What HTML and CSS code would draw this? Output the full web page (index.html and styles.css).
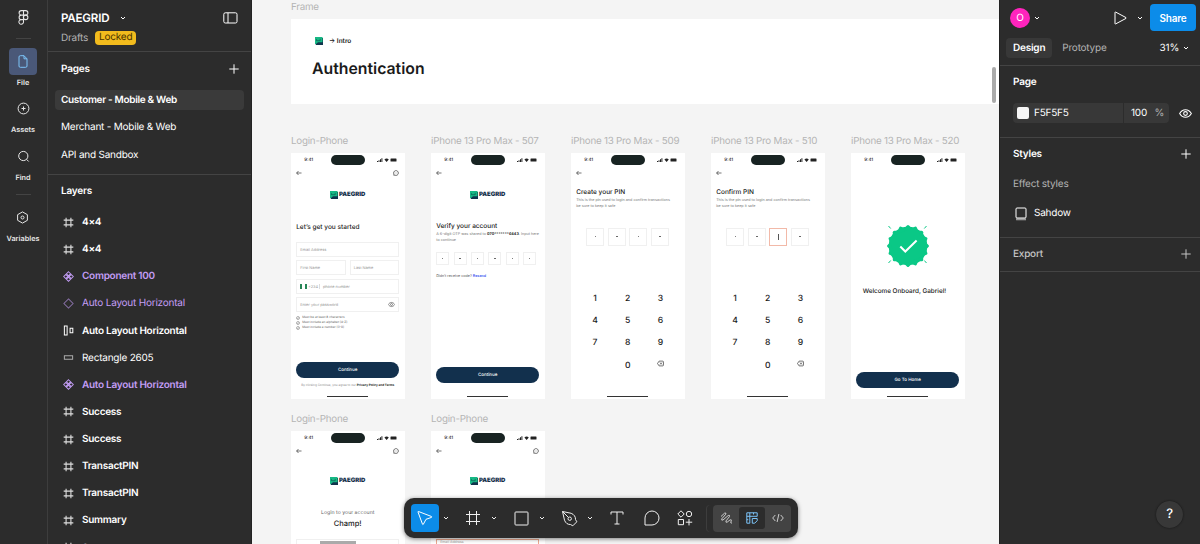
FILE: index.html
```
<!DOCTYPE html>
<html lang="en">
<head>
    <meta charset="UTF-8">
    <meta name="viewport" content="width=device-width, initial-scale=1.0">
    <title>PAEGRID</title>
    <link rel="stylesheet" href="styles.css">
</head>
<body>
    <!-- Icon sprite -->
    <svg class="sprite">
        <symbol id="i-chevron" viewBox="0 0 6 6"><path d="M1 2l2 2 2-2"/></symbol>
        <symbol id="i-plus" viewBox="0 0 10 10"><path d="M5 .3v9.4M.3 5h9.4"/></symbol>
        <symbol id="i-frame" viewBox="0 0 16 16"><path d="M4.5 1v14M11.5 1v14M1 4.5h14M1 11.5h14"/></symbol>
        <symbol id="i-component" viewBox="0 0 12 12"><path d="M6 .8l2.200 2.200L6 5.200 3.800 3zM6 6.800l2.200 2.200L6 11.200 3.800 9zM3 3.800l2.200 2.200L3 8.200.8 6zM9 3.800l2.200 2.200L9 8.200 6.800 6z"/></symbol>
        <symbol id="i-diamond" viewBox="0 0 12 12"><path d="M6 1l5 5-5 5-5-5z"/></symbol>
        <symbol id="i-auto" viewBox="0 0 12 12"><path d="M1.500 1h3v10h-3zM7.700 3.500h3v5h-3z"/></symbol>
        <symbol id="i-rect" viewBox="0 0 12 12"><path d="M1.500 4h9v4h-9z"/></symbol>
        <symbol id="i-eye" viewBox="0 0 12 12"><path d="M.6 6C3.200 1.300 8.800 1.300 11.400 6 8.800 10.700 3.200 10.700.6 6z"/><circle cx="6" cy="6" r="1.700"/></symbol>
        <symbol id="i-back" viewBox="0 0 6 6"><path d="M5.500 3H.6M2.500 1L.6 3l1.900 2"/></symbol>
        <symbol id="i-chat" viewBox="0 0 6 6"><path d="M.7 5.200l.2-1A2.400 2.400 0 1 1 2 5.200zM1.900 3h.3M2.900 3h.3M3.900 3h.3"/></symbol>
        <symbol id="i-tick" viewBox="0 0 4 4"><circle cx="2" cy="2" r="1.500"/><path d="M1.300 2l.5.5.9-1"/></symbol>
        <symbol id="i-delete" viewBox="0 0 7 7"><path d="M.5 3.500l1.600-2.400h3.400q1 0 1 1v2.800q0 1-1 1H2.100zM3 2.500l2 2M5 2.500l-2 2"/></symbol>
        <symbol id="i-status" viewBox="0 0 20 6">
            <path d="M0 5V4h1v1zM1.500 5V3.200h1V5zM3 5V2.200h1V5zM4.400 5V1.200h1V5zM7.400 2.400q2.200-1.900 4.400 0L9.600 5zM14 1.400h5q.5 0 .5.5v2.200q0 .5-.5.500h-5q-.5 0-.5-.5V1.900q0-.5.500-.5z"/>
        </symbol>
        <symbol id="i-brand" viewBox="0 0 8 8">
            <path fill="#10344c" d="M1.500 1H8v7H.7z"/>
            <path fill="#17b884" d="M0 0h7.500v5.200H3L1 7H0z"/>
            <path fill="none" stroke="#0b4a4c" stroke-width=".6" d="M1.500 2.200v1.500h3.700V1.800"/>
        </symbol>
    </svg>

    <div class="app">
        <!-- Navigation rail -->
        <nav class="rail">
            <svg class="icon figma" viewBox="0 0 10 14"><path d="M5 .6H3a2.100 2.100 0 0 0 0 4.200h2zM5 .6h2a2.100 2.100 0 0 1 0 4.200H5zM5 4.800H3A2.100 2.100 0 0 0 3 9h2zM5 9H3a2.150 2.150 0 1 0 2 2.200z"/><circle cx="7" cy="6.900" r="2.100"/></svg>
            <div class="rail-line"></div>
            <div class="rail-item active">
                <span class="rail-icon"><svg class="icon" width="10" height="13" viewBox="0 0 10 13"><path d="M1 2q0-1.300 1.300-1.300H6L9 3.800V11q0 1.300-1.300 1.300H2.300Q1 12.300 1 11zM6 .7v3.100h3"/></svg></span>
                <span>File</span>
            </div>
            <div class="rail-item">
                <span class="rail-icon"><svg class="icon" width="13" height="13" viewBox="0 0 13 13"><circle cx="6.500" cy="6.500" r="5.400"/><path d="M6.500 4.500v4M4.500 6.500h4"/></svg></span>
                <span>Assets</span>
            </div>
            <div class="rail-item">
                <span class="rail-icon"><svg class="icon" width="13" height="13" viewBox="0 0 13 13"><circle cx="6.300" cy="6" r="4.600"/><path d="M9.500 9.300l2.200 2.200"/></svg></span>
                <span>Find</span>
            </div>
            <div class="rail-line lower"></div>
            <div class="rail-item">
                <span class="rail-icon"><svg class="icon" width="13" height="13" viewBox="0 0 13 13"><path d="M6.500.9l4.900 2.800v5.600l-4.900 2.800-4.900-2.800V3.700z"/><circle cx="6.500" cy="6.500" r="1.500"/></svg></span>
                <span>Variables</span>
            </div>
        </nav>

        <!-- Pages and layers -->
        <aside class="left">
            <header class="file-head">
                <div class="file-title">
                    <span class="file-name">PAEGRID</span>
                    <svg class="icon chev"><use href="#i-chevron"/></svg>
                    <svg class="icon sidebar-icon" viewBox="0 0 15 12"><rect x=".8" y=".8" width="13.200" height="10.200" rx="1.500"/><path d="M5 .8V11"/></svg>
                </div>
                <div class="file-sub"><span>Drafts</span><span class="locked">Locked</span></div>
            </header>
            <section class="pages">
                <div class="section-title"><span>Pages</span><svg class="icon plus"><use href="#i-plus"/></svg></div>
                <div class="page selected">Customer - Mobile &amp; Web</div>
                <div class="page">Merchant - Mobile &amp; Web</div>
                <div class="page">API and Sandbox</div>
            </section>
            <section class="layers">
                <div class="layers-title">Layers</div>
                <div class="layer"><svg class="icon frame"><use href="#i-frame"/></svg>4×4</div>
                <div class="layer"><svg class="icon frame"><use href="#i-frame"/></svg>4×4</div>
                <div class="layer purple"><svg class="icon"><use href="#i-component"/></svg>Component 100</div>
                <div class="layer purple light"><svg class="icon"><use href="#i-diamond"/></svg>Auto Layout Horizontal</div>
                <div class="layer"><svg class="icon"><use href="#i-auto"/></svg>Auto Layout Horizontal</div>
                <div class="layer light"><svg class="icon"><use href="#i-rect"/></svg>Rectangle 2605</div>
                <div class="layer purple"><svg class="icon"><use href="#i-component"/></svg>Auto Layout Horizontal</div>
                <div class="layer"><svg class="icon frame"><use href="#i-frame"/></svg>Success</div>
                <div class="layer"><svg class="icon frame"><use href="#i-frame"/></svg>Success</div>
                <div class="layer"><svg class="icon frame"><use href="#i-frame"/></svg>TransactPIN</div>
                <div class="layer"><svg class="icon frame"><use href="#i-frame"/></svg>TransactPIN</div>
                <div class="layer"><svg class="icon frame"><use href="#i-frame"/></svg>Summary</div>
                <div class="layer"><svg class="icon frame"><use href="#i-frame"/></svg>Summary</div>
            </section>
        </aside>

        <!-- Canvas -->
        <main class="canvas">
            <div class="board board-intro">
                <div class="board-name">Frame</div>
                <div class="intro">
                    <div class="crumb"><svg class="crumb-logo"><use href="#i-brand"/></svg><span>→ Intro</span></div>
                    <h1>Authentication</h1>
                </div>
            </div>

            <div class="board board-signup">
                <div class="board-name">Login-Phone</div>
                <div class="phone">
                    <div class="status"><span>9:41</span><i class="island"></i><svg><use href="#i-status"/></svg></div>
                    <div class="nav"><svg class="icon"><use href="#i-back"/></svg><svg class="icon"><use href="#i-chat"/></svg></div>
                    <div class="logo"><svg><use href="#i-brand"/></svg><b>PAEGRID</b></div>
                    <div class="phone-title signup-title">Let’s get you started</div>
                    <div class="form">
                        <div class="field">Email Address</div>
                        <div class="field-row"><div class="field">First Name</div><div class="field">Last Name</div></div>
                        <div class="field"><i class="flag"></i><span class="code">+234</span><span>phone number</span></div>
                        <div class="field"><span>Enter your password</span><svg class="icon eye"><use href="#i-eye"/></svg></div>
                    </div>
                    <div class="rules">
                        <div><svg class="icon"><use href="#i-tick"/></svg>Must be at least 8 characters</div>
                        <div><svg class="icon"><use href="#i-tick"/></svg>Must include an alphabet (A-Z)</div>
                        <div><svg class="icon"><use href="#i-tick"/></svg>Must include a number (0-9)</div>
                    </div>
                    <div class="cta signup-cta">Continue</div>
                    <div class="legal">By clicking Continue, you agree to our <b>Privacy Policy and Terms</b></div>
                    <i class="home"></i>
                </div>
            </div>

            <div class="board board-verify">
                <div class="board-name">iPhone 13 Pro Max - 507</div>
                <div class="phone">
                    <div class="status"><span>9:41</span><i class="island"></i><svg><use href="#i-status"/></svg></div>
                    <div class="nav"><svg class="icon"><use href="#i-back"/></svg></div>
                    <div class="logo"><svg><use href="#i-brand"/></svg><b>PAEGRID</b></div>
                    <div class="phone-title verify-title">Verify your account</div>
                    <div class="phone-text">A 6-digit OTP was shared to <b>070*******6443</b>. Input here<br>to continue</div>
                    <div class="otp"><i></i><i></i><i></i><i></i><i></i><i></i></div>
                    <div class="resend">Didn’t receive code? <b>Resend</b></div>
                    <div class="cta verify-cta">Continue</div>
                    <i class="home"></i>
                </div>
            </div>

            <div class="board board-pin">
                <div class="board-name">iPhone 13 Pro Max - 509</div>
                <div class="phone">
                    <div class="status"><span>9:41</span><i class="island"></i><svg><use href="#i-status"/></svg></div>
                    <div class="nav"><svg class="icon"><use href="#i-back"/></svg></div>
                    <div class="phone-title pin-title">Create your PIN</div>
                    <div class="phone-text">This is the pin used to login and confirm transactions<br>be sure to keep it safe</div>
                    <div class="pin"><i></i><i></i><i></i><i></i></div>
                    <div class="keypad">
                        <span>1</span><span>2</span><span>3</span>
                        <span>4</span><span>5</span><span>6</span>
                        <span>7</span><span>8</span><span>9</span>
                        <span></span><span>0</span><span><svg class="icon"><use href="#i-delete"/></svg></span>
                    </div>
                    <i class="home"></i>
                </div>
            </div>

            <div class="board board-confirm">
                <div class="board-name">iPhone 13 Pro Max - 510</div>
                <div class="phone">
                    <div class="status"><span>9:41</span><i class="island"></i><svg><use href="#i-status"/></svg></div>
                    <div class="nav"><svg class="icon"><use href="#i-back"/></svg></div>
                    <div class="phone-title pin-title">Confirm PIN</div>
                    <div class="phone-text">This is the pin used to login and confirm transactions<br>be sure to keep it safe</div>
                    <div class="pin"><i></i><i></i><i class="focus"></i><i></i></div>
                    <div class="keypad">
                        <span>1</span><span>2</span><span>3</span>
                        <span>4</span><span>5</span><span>6</span>
                        <span>7</span><span>8</span><span>9</span>
                        <span></span><span>0</span><span><svg class="icon"><use href="#i-delete"/></svg></span>
                    </div>
                    <i class="home"></i>
                </div>
            </div>

            <div class="board board-success">
                <div class="board-name">iPhone 13 Pro Max - 520</div>
                <div class="phone">
                    <div class="status"><span>9:41</span><i class="island"></i><svg><use href="#i-status"/></svg></div>
                    <svg class="seal" viewBox="-22 -22 44 44">
                        <g fill="#0ac886">
                            <circle r="19.300"/>
                            <rect x="-15.200" y="-15.200" width="30.400" height="30.400" rx="1.500"/>
                            <rect x="-15.200" y="-15.200" width="30.400" height="30.400" rx="1.500" transform="rotate(22.500)"/>
                            <rect x="-15.200" y="-15.200" width="30.400" height="30.400" rx="1.500" transform="rotate(45)"/>
                            <rect x="-15.200" y="-15.200" width="30.400" height="30.400" rx="1.500" transform="rotate(67.500)"/>
                        </g>
                        <path d="M-7.700 .5l5 5L8.600-5.500" fill="none" stroke="#fff" stroke-width="2"/>
                        <path d="M-19.500-20l2.200 2.500M18.500-20l-2.200 2.500M-19.500 17l2.200-2.500M18.500 17l-2.200-2.500" stroke="#0ac886"/>
                    </svg>
                    <div class="welcome">Welcome Onboard, Gabriel!</div>
                    <div class="cta success-cta">Go To Home</div>
                    <i class="home"></i>
                </div>
            </div>

            <div class="board board-login">
                <div class="board-name">Login-Phone</div>
                <div class="phone">
                    <div class="status"><span>9:41</span><i class="island"></i><svg><use href="#i-status"/></svg></div>
                    <div class="nav"><svg class="icon"><use href="#i-back"/></svg><svg class="icon"><use href="#i-chat"/></svg></div>
                    <div class="logo low"><svg><use href="#i-brand"/></svg><b>PAEGRID</b></div>
                    <div class="login-text">Login to your account</div>
                    <div class="champ">Champ!</div>
                    <div class="switch"><i></i></div>
                </div>
            </div>

            <div class="board board-login-error">
                <div class="board-name">Login-Phone</div>
                <div class="phone">
                    <div class="status"><span>9:41</span><i class="island"></i><svg><use href="#i-status"/></svg></div>
                    <div class="nav"><svg class="icon"><use href="#i-back"/></svg><svg class="icon"><use href="#i-chat"/></svg></div>
                    <div class="logo low"><svg><use href="#i-brand"/></svg><b>PAEGRID</b></div>
                    <div class="field error">Email Address</div>
                </div>
            </div>

            <div class="scrollbar"></div>

            <!-- Toolbar -->
            <div class="toolbar">
                <span class="tool active"><svg class="icon" width="16" height="16" viewBox="0 0 16 16"><path d="M1.500 1.500l13 5q.8.400 0 .9L9 9.300l-2.700 5q-.5.700-.8-.1L1 2q-.1-.7.500-.5z"/></svg></span>
                <svg class="icon chev"><use href="#i-chevron"/></svg>
                <span class="tool"><svg class="icon" width="16" height="16"><use href="#i-frame"/></svg></span>
                <svg class="icon chev"><use href="#i-chevron"/></svg>
                <span class="tool"><svg class="icon" width="15" height="15" viewBox="0 0 15 15"><rect x="1" y="1" width="13" height="13" rx=".8"/></svg></span>
                <svg class="icon chev"><use href="#i-chevron"/></svg>
                <span class="tool"><svg class="icon" width="17" height="17" viewBox="0 0 17 17"><path d="M1.500 1.500l8.700 1.800q4.500 2 4.300 6.200l1.300 2.300-4 4-2.300-1.300q-4.200.2-6-4.300zM1.500 1.500l6 6"/><circle cx="8.700" cy="8.700" r="1.700"/></svg></span>
                <svg class="icon chev"><use href="#i-chevron"/></svg>
                <span class="tool"><svg class="icon" width="14" height="14" viewBox="0 0 14 14"><path d="M1 3.500V1h12v2.500M7 1v12M4.500 13h5"/></svg></span>
                <span class="tool comment"><svg class="icon" width="16" height="16" viewBox="0 0 16 16"><path d="M1 15V8a7 7 0 1 1 7 7z"/></svg></span>
                <span class="tool"><svg class="icon" width="16" height="16" viewBox="0 0 16 16"><path d="M4 .8L7.200 4 4 7.200.8 4zM12 9v6.400M8.800 12.200h6.400M1.300 9.500h5.200v5.200H1.300z"/><circle cx="12" cy="4" r="2.700"/></svg></span>
                <div class="modes">
                    <span><svg class="icon" width="13" height="13" viewBox="0 0 13 13"><path d="M1 4.500L4.500 1.200Q6.500.3 5.800 2.200L1.800 6.800Q1.200 8.800 3 8L8.200 3.500q2-.8 1.200 1.200L6 8.900q-.6 2 1.200 1.200l3-2.300q1.700-.4 1 1.200-1.400 2.300.8 2.200"/></svg></span>
                    <span class="on"><svg class="icon" width="12" height="12" viewBox="0 0 12 12"><path d="M11.200 4.300V.8H.8v10.400h3V4.300M.8 4.300h10.400M3.800.8v3.500M7.500.8v1.700M.8 7.700h1.500M6.300 6.500h4.900v2.200l-2.500 2.500H6.300z"/></svg></span>
                    <span><svg class="icon" width="12" height="10" viewBox="0 0 12 10"><path d="M3.300 2L.7 5l2.600 3M8.700 2l2.600 3-2.600 3M6.900 1L5.100 9"/></svg></span>
                </div>
            </div>
        </main>

        <!-- Properties -->
        <aside class="right">
            <div class="user-bar">
                <span class="avatar">O</span>
                <svg class="icon chev"><use href="#i-chevron"/></svg>
                <svg class="icon play" viewBox="0 0 13 14"><path d="M1 1.500q0-.8.700-.4L12 6.600q.6.400 0 .8L1.700 12.900q-.7.400-.7-.4z"/></svg>
                <svg class="icon chev"><use href="#i-chevron"/></svg>
                <button class="share">Share</button>
            </div>
            <div class="tabs">
                <span class="tab current">Design</span>
                <span class="tab">Prototype</span>
                <span class="zoom">31%</span>
                <svg class="icon chev"><use href="#i-chevron"/></svg>
            </div>
            <section class="prop-page">
                <div class="prop-title">Page</div>
                <div class="fill-row">
                    <span class="fill-color"><i></i>F5F5F5</span>
                    <span class="fill-alpha">100<em>%</em></span>
                    <svg class="icon eye"><use href="#i-eye"/></svg>
                </div>
            </section>
            <section class="prop-styles">
                <div class="prop-title"><span>Styles</span><svg class="icon plus"><use href="#i-plus"/></svg></div>
                <div class="effect-title">Effect styles</div>
                <div class="effect"><svg class="icon" viewBox="0 0 12 14"><path d="M1 12.300h10" class="shade"/><rect x="1" y="1" width="10" height="10" rx="1"/></svg>Sahdow</div>
            </section>
            <section class="prop-export">
                <div class="prop-title"><span>Export</span><svg class="icon plus"><use href="#i-plus"/></svg></div>
            </section>
            <div class="help">?</div>
        </aside>
    </div>
</body>
</html>
```
FILE: styles.css
```
* {
    box-sizing: border-box;
}

body {
    margin: 0;
    font-family: Inter, "Liberation Sans", sans-serif;
    font-size: 10px;
    letter-spacing: -.22px;
    text-rendering: geometricPrecision;
    color: #fff;
    background-color: #2c2c2c;
    overflow: hidden;
}

.sprite {
    display: none;
}

.icon {
    fill: none;
    stroke: currentColor;
    stroke-width: 1;
    flex: none;
}

.chev {
    width: 6px;
    height: 6px;
}

.plus {
    width: 10px;
    height: 10px;
}

.app {
    display: flex;
    width: 1200px;
    height: 544px;
    overflow: hidden;
}

/* Rail */
.rail {
    width: 48px;
    border-right: 1px solid #3d3d3d;
    padding: 10px 1px 0 0;
    display: flex;
    flex-direction: column;
    align-items: center;
    flex: none;
    color: #e6e6e6;
    letter-spacing: 0;
}

.figma {
    width: 11px;
    height: 15px;
}

.rail-line {
    width: 15px;
    height: 1px;
    margin: 13px 0 9px;
    background-color: #444;
}

.rail-line.lower {
    margin: 4px 0 9px;
}

.rail-item {
    display: flex;
    flex-direction: column;
    align-items: center;
    font-size: 7.300px;
    font-weight: 600;
    line-height: 15px;
    margin-bottom: 5.400px;
}

.rail-icon {
    width: 28px;
    height: 27px;
    border-radius: 4px;
    display: flex;
    align-items: center;
    justify-content: center;
}

.rail-item.active .rail-icon {
    background-color: #4a5878;
    color: #7cc4f8;
}

/* Left panel */
.left {
    width: 204px;
    border-right: 1px solid #222;
    flex: none;
}

.file-head {
    height: 52px;
    padding: 10px 13px 0 13px;
    border-bottom: 1px solid #444;
}

.file-title {
    display: flex;
    align-items: center;
    height: 16px;
}

.file-name {
    font-size: 11.600px;
    font-weight: 600;
    width: 59px;
}

.sidebar-icon {
    width: 15px;
    height: 12px;
    margin-left: auto;
}

.file-sub {
    display: flex;
    align-items: center;
    gap: 7px;
    margin-top: 5px;
    height: 14px;
    color: #b3b3b3;
}

.locked {
    height: 14px;
    line-height: 13px;
    padding: 0 4px;
    border-radius: 4px;
    background-color: #f2bb1d;
    color: #4a3300;
}

.pages {
    height: 123px;
    padding: 8px 7px 0;
    border-bottom: 1px solid #444;
}

.section-title {
    display: flex;
    align-items: center;
    justify-content: space-between;
    height: 18px;
    margin-bottom: 12px;
    padding: 0 5px 0 6px;
    font-weight: 600;
}

.page {
    height: 20px;
    line-height: 20px;
    padding-left: 6px;
    margin-bottom: 7.300px;
    border-radius: 4px;
}

.page.selected {
    background-color: #3a3a3a;
    font-weight: 600;
    letter-spacing: -.32px;
}

.layers-title {
    padding: 7px 13px 0;
    height: 33px;
    line-height: 19px;
    font-weight: 600;
}

.layer {
    display: flex;
    align-items: center;
    height: 27.130px;
    padding: 1px 0 0 15px;
    font-weight: 600;
    letter-spacing: -.27px;
}

.layer svg {
    width: 11px;
    height: 11px;
    margin-right: 8px;
    stroke-width: 1.100;
}

.layer .frame {
    stroke-width: 1.600;
    color: #ddd;
}

.layer.purple {
    color: #c39df5;
}

.layer.light {
    font-weight: 400;
    letter-spacing: -.22px;
}

.layer.light svg {
    opacity: .6;
}

/* Canvas: boards are placed freely */
.canvas {
    position: relative;
    width: 747px;
    background-color: #f4f4f4;
    color: #1a1a1a;
    letter-spacing: 0;
    overflow: hidden;
    flex: none;
}

.board {
    position: absolute;
}

.board-intro {
    left: 39px;
    top: 1px;
}

.board-signup,
.board-verify,
.board-pin,
.board-confirm,
.board-success {
    top: 135px;
}

.board-signup,
.board-login {
    left: 39px;
}

.board-verify,
.board-login-error {
    left: 179px;
}

.board-pin {
    left: 319px;
}

.board-confirm {
    left: 459px;
}

.board-success {
    left: 599px;
}

.board-login,
.board-login-error {
    top: 413px;
}

.board-name {
    height: 18px;
    line-height: 14px;
    font-size: 9.800px;
    letter-spacing: -.23px;
    color: #b5b5b5;
    white-space: nowrap;
}

.intro {
    width: 708px;
    height: 85px;
    padding: 17px 21px;
    background-color: #fff;
}

.crumb {
    display: flex;
    align-items: center;
    gap: 6px;
    height: 10px;
    padding-left: 3px;
    font-size: 6.500px;
    font-weight: 600;
}

.crumb-logo {
    width: 8px;
    height: 8px;
}

.intro h1 {
    margin: 13px 0 0;
    font-size: 15.800px;
    line-height: 20px;
    font-weight: 600;
}

.phone {
    display: flex;
    flex-direction: column;
    width: 114px;
    height: 246px;
    padding: 0 5.800px 0 5.200px;
    background-color: #fff;
    overflow: hidden;
}

.status {
    display: grid;
    grid-template-columns: 26.800px 34px 20px;
    align-items: center;
    height: 14px;
    padding-left: 8px;
    font-size: 4.500px;
    font-weight: 500;
    flex: none;
}

.status svg {
    width: 20px;
    height: 6px;
    margin-left: 12px;
    fill: #222;
}

.island {
    height: 10px;
    margin-top: -1px;
    border-radius: 5px;
    background-color: #182322;
}

.nav {
    display: flex;
    justify-content: space-between;
    height: 12px;
    align-items: center;
    flex: none;
}

.nav svg {
    width: 6px;
    height: 6px;
    stroke-width: .6;
}

.logo {
    display: flex;
    align-items: center;
    justify-content: center;
    gap: 1px;
    height: 10px;
    margin-top: 10.500px;
    color: #14304a;
    font-size: 6px;
    font-weight: 700;
    flex: none;
}

.logo.low {
    margin-top: 18.500px;
}

.logo svg {
    width: 8px;
    height: 8px;
}

.phone-title {
    font-size: 6.500px;
    line-height: 10px;
    font-weight: 500;
    white-space: nowrap;
}

.signup-title {
    margin-top: 22px;
}

.verify-title {
    margin-top: 21px;
}

.pin-title {
    margin-top: 7.500px;
}

.phone-text {
    margin-top: .6px;
    font-size: 3.750px;
    line-height: 5.500px;
    color: #777;
    white-space: nowrap;
}

.phone-text b {
    color: #222;
}

.form {
    display: flex;
    flex-direction: column;
    gap: 3.500px;
    margin-top: 10px;
}

.field {
    display: flex;
    align-items: center;
    height: 15px;
    padding: 0 3px;
    border: 1px solid #f0f0f0;
    font-size: 3.900px;
    color: #999;
    flex: 1 0 auto;
}

.field-row {
    display: grid;
    grid-template-columns: 1fr 1fr;
    gap: 4px;
}

.flag {
    width: 7px;
    height: 5px;
    border: solid #278657;
    border-width: 0 2px;
}

.code {
    margin: 0 3px 0 1px;
    padding-right: 1px;
    border-right: 1px solid #ddd;
}

.field .eye {
    width: 7px;
    height: 7px;
    margin-left: auto;
    color: #444;
}

.rules {
    margin-top: 3px;
    font-size: 3.100px;
    line-height: 5.200px;
    color: #666;
}

.rules div {
    display: flex;
    align-items: center;
    gap: 2px;
}

.rules svg {
    width: 4px;
    height: 4px;
    stroke-width: .5;
}

.cta {
    height: 16px;
    line-height: 17px;
    border-radius: 8px;
    background-color: #12304d;
    color: #fff;
    font-size: 4.500px;
    font-weight: 500;
    text-align: center;
    flex: none;
}

.signup-cta {
    margin-top: 31px;
}

.legal {
    margin-top: 4.500px;
    font-size: 3.050px;
    line-height: 6px;
    color: #888;
    text-align: center;
    white-space: nowrap;
}

.legal b {
    color: #222;
}

.home {
    width: 41px;
    height: 1px;
    margin: auto auto 2px;
    background-color: #333;
    flex: none;
}

.otp {
    display: flex;
    gap: 4.400px;
    margin-top: 10px;
}

.otp i,
.pin i {
    display: flex;
    align-items: center;
    justify-content: center;
    width: 13px;
    height: 13px;
    border: 1px solid #f0f0f0;
}

.otp i::after,
.pin i::after {
    content: "";
    width: 1.500px;
    height: 1.500px;
    border-radius: 50%;
    background-color: #555;
}

.resend {
    margin-top: 7.500px;
    font-size: 3.700px;
    line-height: 6px;
    color: #555;
}

.resend b {
    color: #3c55f0;
    font-weight: 600;
}

.verify-cta {
    margin-top: 88px;
}

.pin {
    display: flex;
    justify-content: center;
    gap: 3.500px;
    margin-top: 19.500px;
}

.pin i {
    width: 18px;
    height: 18px;
}

.pin .focus {
    border-color: #f2b9a8;
}

.pin .focus::after {
    width: 1px;
    height: 6px;
    border-radius: 0;
}

.keypad {
    display: grid;
    grid-template-columns: repeat(3, 32.700px);
    grid-auto-rows: 22.300px;
    justify-content: center;
    margin-top: 42px;
    font-size: 8.600px;
    font-weight: 500;
}

.keypad span {
    display: flex;
    align-items: center;
    justify-content: center;
}

.keypad svg {
    width: 7px;
    height: 7px;
    margin-bottom: 5px;
    stroke-width: .6;
}

.seal {
    width: 44px;
    height: 44px;
    margin: 57px auto 0;
    flex: none;
}

.welcome {
    margin-top: 18px;
    padding-left: 6.500px;
    font-size: 6.350px;
    line-height: 10px;
    font-weight: 500;
    white-space: nowrap;
}

.success-cta {
    margin-top: 76px;
}

.login-text {
    margin-top: 22.500px;
    font-size: 5.200px;
    line-height: 10px;
    color: #666;
    text-align: center;
}

.champ {
    font-size: 7.500px;
    line-height: 11px;
    font-weight: 500;
    text-align: center;
}

.switch {
    margin-top: 9.500px;
    height: 14px;
    border: 1px solid #f0f0f0;
}

.switch i {
    display: block;
    width: 36px;
    height: 8px;
    margin: 1px 0 0 23px;
    background-color: #aaa;
}

.field.error {
    flex: none;
    align-items: flex-start;
    margin-top: 53px;
    font-size: 3.500px;
    line-height: 4px;
    border: 1px solid #eda98f;
}

.scrollbar {
    position: absolute;
    right: 3px;
    top: 67px;
    width: 4px;
    height: 36px;
    border-radius: 2px;
    background-color: #aaa;
}

/* Toolbar */
.toolbar {
    position: absolute;
    left: 152px;
    top: 498px;
    width: 394px;
    height: 40px;
    padding: 0 7px;
    border-radius: 10px;
    display: flex;
    align-items: center;
    background-color: #2c2c2c;
    color: #f0f0f0;
    box-shadow: 0 1px 4px rgba(0, 0, 0, .5);
}

.tool {
    width: 28px;
    height: 28px;
    border-radius: 4px;
    display: flex;
    align-items: center;
    justify-content: center;
}

.tool.active {
    background-color: #0c8ce9;
    color: #fff;
}

.toolbar .chev {
    margin: 0 10.500px 0 3.600px;
}

.tool.comment {
    margin: 0 5.500px 0 6.500px;
}

.modes {
    display: flex;
    align-items: center;
    width: 78px;
    height: 27px;
    margin-left: auto;
    border-radius: 4px;
    background-color: #434343;
    box-shadow: -6px 0 0 #2c2c2c, -7px 0 0 #3d3d3d;
    color: #ccc;
}

.modes span {
    width: 26px;
    height: 22px;
    display: flex;
    align-items: center;
    justify-content: center;
    border-radius: 3px;
}

.modes .on {
    background-color: #2c2c2c;
    color: #7cc4f8;
}

/* Right panel */
.right {
    position: relative;
    width: 201px;
    border-left: 1px solid #222;
    flex: none;
}

.user-bar {
    display: flex;
    align-items: center;
    height: 35px;
    padding: 0 4px 0 10px;
}

.avatar {
    width: 20px;
    height: 20px;
    line-height: 20px;
    margin-right: 4px;
    border-radius: 50%;
    background-color: #ff24bd;
    text-align: center;
}

.play {
    width: 13px;
    height: 14px;
    margin: 0 10px 0 auto;
}

.share {
    width: 46px;
    height: 27px;
    margin-left: 7.500px;
    padding: 0;
    border: none;
    border-radius: 4px;
    background-color: #0c8ce9;
    color: #fff;
    font-family: inherit;
    font-size: 10px;
    font-weight: 600;
    letter-spacing: -.22px;
}

.tabs {
    display: flex;
    align-items: center;
    height: 31px;
    padding: 0 11px 5px 6px;
    border-bottom: 1px solid #444;
}

.tab {
    height: 20px;
    line-height: 20px;
    padding: 0 7px;
    border-radius: 4px;
    color: #b3b3b3;
}

.tab.current {
    margin-right: 3px;
    background-color: #383838;
    color: #fff;
    font-weight: 600;
}

.zoom {
    margin: 0 4px 0 auto;
}

.right section {
    padding: 0 9px 0 13px;
    border-bottom: 1px solid #444;
}

.prop-title {
    display: flex;
    align-items: center;
    justify-content: space-between;
    height: 32px;
    font-weight: 600;
}

.prop-page {
    height: 72px;
}

.fill-row {
    display: flex;
    align-items: center;
    gap: 1px;
    height: 20px;
    margin-top: 5px;
}

.fill-color,
.fill-alpha {
    display: flex;
    align-items: center;
    height: 20px;
    background-color: #383838;
}

.fill-color {
    width: 110px;
    padding-left: 4px;
    border-radius: 4px 0 0 4px;
}

.fill-color i {
    width: 12px;
    height: 12px;
    margin-right: 5px;
    border-radius: 2px;
    background-color: #f5f5f5;
}

.fill-alpha {
    width: 45px;
    padding: 0 5px 0 7px;
    justify-content: space-between;
    border-radius: 0 4px 4px 0;
}

.fill-alpha em {
    font-style: normal;
    color: #b3b3b3;
}

.fill-row .eye {
    width: 13px;
    height: 13px;
    margin: 0 -1px 0 auto;
}

.prop-styles {
    height: 100px;
}

.effect-title {
    height: 29px;
    line-height: 29px;
    color: #b3b3b3;
}

.effect {
    display: flex;
    align-items: center;
    height: 27px;
}

.effect svg {
    width: 12px;
    height: 14px;
    margin: 2px 7px 0 2px;
}

.shade {
    stroke: #999;
    stroke-width: 2;
}

.prop-export {
    height: 34px;
    color: #c4c4c4;
}

.prop-export .prop-title {
    font-weight: 500;
}

.help {
    position: absolute;
    left: 156px;
    top: 501px;
    width: 27px;
    height: 27px;
    line-height: 27px;
    border-radius: 50%;
    background-color: #383838;
    box-shadow: 0 0 2px #111;
    font-size: 13px;
    font-weight: 500;
    text-align: center;
}
```
